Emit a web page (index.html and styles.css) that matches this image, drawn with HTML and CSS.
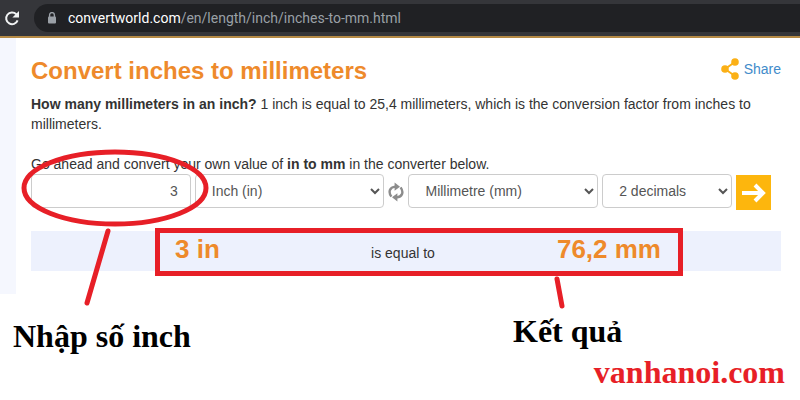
FILE: index.html
```
<!DOCTYPE html>
<html lang="en">
<head>
  <meta charset="UTF-8">
  <meta name="viewport" content="width=device-width, initial-scale=1.0">
  <title>Convert inches to millimeters</title>
  <link rel="stylesheet" href="styles.css">
</head>
<body>
  <header class="browser-bar">
    <button class="reload" type="button" aria-label="Reload">
      <svg width="16" height="16" viewBox="0 0 16 16">
        <path d="M13.600 10.400A5.900 5.900 0 1 1 12.300 4.200" fill="none" stroke="#f1f3f4" stroke-width="2"/>
        <path d="M15 1v6.600H8.400z" fill="#f1f3f4"/>
      </svg>
    </button>
    <div class="address">
      <svg width="10" height="12" viewBox="0 0 10 12">
        <path d="M2.600 5V3a2.400 2.400 0 0 1 4.800 0v2" fill="none" stroke="#9aa0a6" stroke-width="1.400"/>
        <rect x="1" y="4.400" width="8" height="7" rx="1" fill="#9aa0a6"/>
      </svg>
      <span class="url"><span class="host">convertworld.com</span>/en/length/inch/inches-to-mm.html</span>
    </div>
  </header>

  <main class="page">
    <div class="heading">
      <h1>Convert inches to millimeters</h1>
      <a class="share" href="#share">
        <svg width="18" height="22" viewBox="0 0 18 22">
          <path d="M14 4L4 11l10 7" fill="none" stroke="#fbb016" stroke-width="2"/>
          <circle cx="14" cy="4" r="3.8" fill="#fbb016"/>
          <circle cx="4" cy="11" r="3.8" fill="#fbb016"/>
          <circle cx="14" cy="18" r="3.8" fill="#fbb016"/>
        </svg>
        Share
      </a>
    </div>

    <p class="intro"><b>How many millimeters in an inch?</b> 1 inch is equal to 25,4 millimeters, which is the conversion factor from inches to millimeters.</p>
    <p>Go ahead and convert your own value of <b>in to mm</b> in the converter below.</p>

    <form class="converter">
      <div class="amount">
        <input type="text" id="amount" value="3" aria-label="Amount">
        <svg class="mark" width="190" height="160" viewBox="0 0 190 160">
          <ellipse cx="94" cy="39" rx="91" ry="36"/>
          <path d="M87 82L66 154"/>
        </svg>
      </div>
      <select id="from" aria-label="From unit">
        <option>Inch (in)</option>
      </select>
      <button class="swap" type="button" aria-label="Swap units">
        <svg width="16" height="20" viewBox="0 0 16 20">
          <path d="M3.400 14.600C0 10 1.600 5 7.400 4.600M12.600 5.400C16 10 14.400 15 8.600 15.400" fill="none" stroke="#8c8c8c" stroke-width="2.400"/>
          <path d="M6.600 0.400l5.400 4.400-5.400 4zM9.400 11.200v8.400L4 15.200z" fill="#8c8c8c"/>
        </svg>
      </button>
      <select id="to" aria-label="To unit">
        <option>Millimetre (mm)</option>
      </select>
      <select id="decimals" aria-label="Decimals">
        <option>2 decimals</option>
      </select>
      <button class="go" type="submit" aria-label="Convert">
        <svg width="35" height="35" viewBox="0 0 35 35">
          <path d="M6 18h20M19 10l8 8-8 8" fill="none" stroke="#fff" stroke-width="4"/>
        </svg>
      </button>
    </form>

    <div class="result">
      <span class="value from-value">3 in</span>
      <span>is equal to</span>
      <span class="value to-value">76,2 mm</span>
      <div class="frame">
        <svg class="mark" width="12" height="34" viewBox="0 0 12 34">
          <path d="M3 3l5 27"/>
        </svg>
      </div>
    </div>
  </main>

  <footer class="captions">
    <p class="caption-input" lang="vi">Nhập số inch</p>
    <p class="caption-result" lang="vi">Kết quả</p>
    <p class="site">vanhanoi.com</p>
  </footer>
</body>
</html>
```

FILE: styles.css
```
* {
  box-sizing: border-box;
}
body {
  margin: 0;
  background-color: #fff;
  color: #333;
  font-family: "Liberation Sans", Arial, sans-serif;
  font-size: 14px;
  line-height: 20px;
}
h1, p {
  margin: 0;
}
svg {
  display: block;
}
button {
  padding: 0;
  border: none;
  background: none;
  cursor: pointer;
}

/* browser bar */
.browser-bar {
  display: flex;
  align-items: center;
  gap: 14px;
  height: 38px;
  padding: 0 0 0 4px;
  background-color: #35363a;
  border-bottom: 2px solid #b58a45;
}
.address {
  flex: 1;
  display: flex;
  align-items: center;
  gap: 11px;
  height: 28px;
  padding-left: 13px;
  background-color: #202124;
  border-radius: 14px 0 0 14px;
}
.url {
  color: #9aa0a6;
  font-family: Roboto, "Open Sans", sans-serif;
}
.host {
  color: #fff;
}

/* page */
.page {
  padding: 16px 19px 23px 15px;
  border-left: 16px solid #f5f7fe;
}
.heading {
  display: flex;
  justify-content: space-between;
  align-items: flex-start;
  margin-bottom: 6px;
}
h1 {
  color: #ee8a2b;
  font-size: 24px;
  line-height: 34px;
}
.share {
  display: flex;
  align-items: center;
  gap: 5px;
  padding-top: 4px;
  color: #428bca;
  text-decoration: none;
}
.intro {
  margin-bottom: 20px;
}

.converter {
  display: grid;
  grid-template-columns: 16fr 19fr 16px 19fr 13fr 35px;
  gap: 4px;
  padding-right: 10px;
}
.amount {
  position: relative;
}
input, select {
  width: 100%;
  height: 34px;
  padding: 6px 12px;
  border: 1px solid #ccc;
  border-radius: 4px;
  background-color: #fff;
  color: #555;
  font-family: inherit;
  font-size: 14px;
}
input {
  text-align: right;
}
.go {
  height: 35px;
  margin-top: 1px;
  background-color: #fdb60d;
}

.result {
  position: relative;
  display: grid;
  grid-template-columns: 1fr auto 1fr;
  align-items: baseline;
  height: 40px;
  margin-top: 21px;
  padding: 0 120px 0 114px;
  background-color: #edf1fd;
}
.value {
  color: #ee8a2b;
  font-size: 26px;
  font-weight: bold;
  line-height: 36px;
}
.from-value {
  padding-left: 30px;
}
.to-value {
  text-align: right;
}

/* red marks */
.mark {
  position: absolute;
  z-index: 1;
  fill: none;
  stroke: #e71f27;
  stroke-width: 5px;
  stroke-linecap: round;
}
.amount .mark {
  top: -25px;
  left: -10px;
  pointer-events: none;
}
.frame {
  position: absolute;
  inset: -3px 98px -5px 124px;
  border: 5px solid #e71f27;
}
.frame .mark {
  top: 100%;
  right: 112px;
  margin-top: 5px;
}

.captions {
  display: grid;
  grid-template-columns: 513fr 287fr;
  padding-top: 19px;
  color: #000;
  font-family: "Liberation Serif", "Times New Roman", serif;
  font-size: 32px;
  font-weight: bold;
  line-height: 36px;
}
.caption-input {
  padding: 5px 0 0 13px;
}
.site {
  grid-column: 1 / 3;
  padding-right: 15px;
  color: #e71f27;
  text-align: right;
}
```
